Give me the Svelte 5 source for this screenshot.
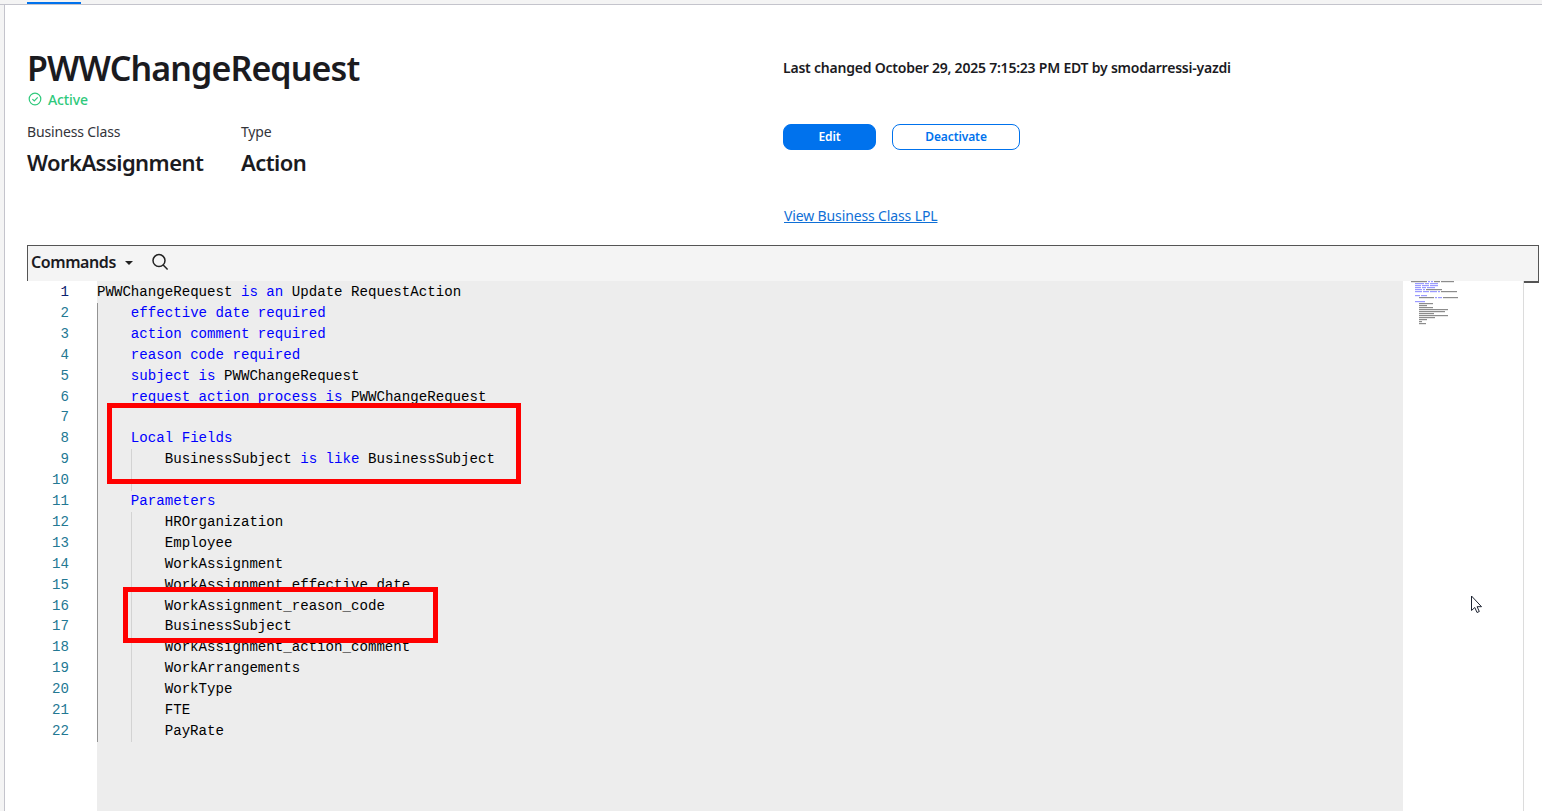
<script>
  const kw = (t) => ({ t, k: 1 });
  const tx = (t) => ({ t, k: 0 });
  const lines = [
    { g: 0, s: [tx('PWWChangeRequest '), kw('is an'), tx(' Update RequestAction')] },
    { g: 1, s: [kw('effective date required')] },
    { g: 1, s: [kw('action comment required')] },
    { g: 1, s: [kw('reason code required')] },
    { g: 1, s: [kw('subject is'), tx(' PWWChangeRequest')] },
    { g: 1, s: [kw('request action process is'), tx(' PWWChangeRequest')] },
    { g: 1, s: [], blank: true },
    { g: 1, s: [kw('Local Fields')] },
    { g: 2, s: [tx('BusinessSubject '), kw('is like'), tx(' BusinessSubject')] },
    { g: 2, s: [], blank: true },
    { g: 1, s: [kw('Parameters')] },
    ...['HROrganization', 'Employee', 'WorkAssignment', 'WorkAssignment_effective_date', 'WorkAssignment_reason_code', 'BusinessSubject', 'WorkAssignment_action_comment', 'WorkArrangements', 'WorkType', 'FTE', 'PayRate'].map((n) => ({ g: 2, s: [tx(n)] }))
  ];

  const mini = [];
  lines.forEach((l, i) => {
    let x = l.g * 4;
    l.s.forEach((seg) => {
      let pos = 0;
      seg.t.split(' ').forEach((word) => {
        if (word.length) mini.push({ x: x + pos, y: i * 2, w: word.length, k: seg.k });
        pos += word.length + 1;
      });
      x += seg.t.length;
    });
  });
</script>

<div class="page">
  <div class="tabs"><span class="tab"></span></div>
  <main class="panel">
    <header class="head">
      <div class="left">
        <h1>PWWChangeRequest</h1>
        <div class="status">
          <svg width="14" height="14" viewBox="0 0 14 14" fill="none" stroke="#2fc97c" stroke-width="1.2">
            <circle cx="7" cy="7" r="5.8" />
            <path d="M4.4 7.1 6.3 9 9.7 5.3" />
          </svg>
          <span>Active</span>
        </div>
        <div class="facts">
          <div class="fact class"><span class="label">Business Class</span><strong>WorkAssignment</strong></div>
          <div class="fact"><span class="label">Type</span><strong>Action</strong></div>
        </div>
      </div>
      <div class="right">
        <p class="changed">Last changed October 29, 2025 7:15:23 PM EDT by smodarressi-yazdi</p>
        <div class="actions">
          <button class="primary">Edit</button>
          <button class="secondary">Deactivate</button>
        </div>
        <a class="lpl" href="#lpl">View Business Class LPL</a>
      </div>
    </header>

    <section class="editor-wrap">
      <div class="toolbar">
        <span class="cmd">Commands</span>
        <span class="caret"></span>
        <svg class="search" width="18" height="18" viewBox="0 0 18 18" fill="none" stroke="#222" stroke-width="1.5">
          <circle cx="8" cy="7.6" r="6" />
          <path d="M12.2 12 16.6 16.6" />
        </svg>
      </div>
      <div class="editor">
        <div class="gutter">
          {#each lines as _, i}
            <div class="num" class:active={i === 0}>{i + 1}</div>
          {/each}
        </div>
        <div class="code">
          {#each lines as l}
            <div class="line">
              {#each Array(l.g) as _, gi}
                <span class="indent" class:outer={gi === 0}></span>
              {/each}
              {#each l.s as seg}
                <span class:kw={seg.k === 1}>{seg.t}</span>
              {/each}
            </div>
          {/each}
          <div class="mark one"></div>
          <div class="mark two"></div>
        </div>
        <div class="minimap">
          <svg width="112" height="48" viewBox="0 0 112 48">
            {#each mini as m}
              <rect x={m.x} y={m.y} width={m.w} height="1.2" fill={m.k ? '#9a9aff' : '#8c8c8c'} />
            {/each}
          </svg>
        </div>
        <div class="scroll"></div>
      </div>
    </section>
  </main>

  <svg class="cursor" width="14" height="20" viewBox="0 0 14 20">
    <path d="M1.5 1v14.5l3.3-3 2.2 5 2.3-1-2.2-4.8h4.4z" fill="#fff" stroke="#1c2230" stroke-width="1" />
  </svg>
</div>

<style>
  :global(body) {
    margin: 0;
    overflow: hidden;
    background: #fff;
  }

  .page {
    position: relative;
    width: 1542px;
    height: 811px;
    overflow: hidden;
    background: #f4f4f4;
    font-family: "Noto Sans", "Open Sans", sans-serif;
    color: #1b1b1f;
  }

  .tabs {
    height: 4px;
    padding-left: 27px;
    border-bottom: 1px solid #c4c4cc;
  }

  .tab {
    display: block;
    width: 54px;
    height: 2px;
    padding-top: 2px;
    background: #0072ed;
    background-clip: content-box;
  }

  .panel {
    height: 806px;
    margin-left: 4px;
    border-left: 1px solid #c4c4cc;
    background: #fff;
    padding-left: 22px;
    box-sizing: border-box;
  }

  .head {
    display: flex;
    height: 240px;
    box-sizing: border-box;
  }

  .left {
    width: 756px;
    padding-top: 41px;
  }

  h1 {
    margin: 0;
    font-size: 34px;
    line-height: 44px;
    font-weight: 600;
    letter-spacing: -0.9px;
  }

  .status {
    display: flex;
    align-items: center;
    gap: 6px;
    height: 20px;
    margin-top: -1px;
    padding-left: 1px;
    font-size: 14px;
    font-weight: 500;
    color: #2fc97c;
    letter-spacing: -0.1px;
  }

  .facts {
    display: flex;
    margin-top: 13px;
  }

  .fact {
    display: flex;
    flex-direction: column;
    gap: 6px;
  }

  .fact.class {
    width: 214px;
  }

  .label {
    font-size: 14px;
    line-height: 20px;
    color: #33343a;
    letter-spacing: -0.15px;
  }

  .fact strong {
    font-size: 22px;
    line-height: 28px;
    font-weight: 600;
    letter-spacing: -0.55px;
  }

  .right {
    display: flex;
    flex-direction: column;
    align-items: flex-start;
  }

  .changed {
    margin: 0;
    padding-top: 53px;
    font-size: 14px;
    line-height: 20px;
    font-weight: 600;
    letter-spacing: -0.22px;
  }

  .actions {
    display: flex;
    gap: 16px;
    margin-top: 46px;
  }

  button {
    height: 26px;
    box-sizing: border-box;
    border-radius: 8px;
    font: 600 12px/24px "Noto Sans", sans-serif;
    padding: 0;
    border: 1px solid #0072ed;
    letter-spacing: -0.1px;
  }

  .primary {
    width: 93px;
    background: #0072ed;
    color: #fff;
  }

  .secondary {
    width: 128px;
    background: #fff;
    color: #0072ed;
  }

  .lpl {
    margin-top: 56px;
    margin-left: 1px;
    font-size: 14px;
    line-height: 20px;
    color: #0f6fd6;
    letter-spacing: -0.13px;
  }

  .editor-wrap {
    width: 1512px;
  }

  .toolbar {
    display: flex;
    align-items: center;
    height: 38px;
    box-sizing: border-box;
    padding: 0 0 3px 3px;
    background: #f4f4f4;
    border: 1px solid #555;
    border-bottom-width: 2px;
  }

  .cmd {
    font-size: 16px;
    font-weight: 600;
    letter-spacing: -0.42px;
  }

  .caret {
    width: 0;
    height: 0;
    margin: 2px 0 0 9px;
    border: 4px solid transparent;
    border-top-color: #222;
    border-bottom-width: 0;
  }

  .search {
    margin-left: 18px;
  }

  .editor {
    position: relative;
    display: flex;
    height: 530px;
    margin-top: -2px;
    margin-right: 16px;
    font-family: "Liberation Mono", monospace;
    font-size: 14.11px;
    line-height: 20.9px;
    white-space: pre;
    background: #fff;
  }

  .gutter {
    width: 70px;
    flex: none;
    box-sizing: border-box;
    padding: 1.15px 28px 0 0;
    text-align: right;
  }

  .num {
    height: 20.9px;
    color: #237893;
  }

  .num.active {
    color: #0b216f;
  }

  .code {
    position: relative;
    flex: none;
    width: 1306px;
    padding-top: 1.15px;
    box-sizing: border-box;
    background: #ededed;
    color: #000;
  }

  .line {
    display: flex;
    height: 20.9px;
  }

  .indent {
    width: 33.87px;
    flex: none;
    box-sizing: border-box;
    border-left: 1px solid #d3d3d3;
  }

  .indent.outer {
    border-left-color: #939393;
  }

  .kw {
    color: #0000ff;
  }

  .mark {
    position: absolute;
    box-sizing: border-box;
    border: 5px solid #f00;
  }

  .mark.one {
    left: 10px;
    top: 122px;
    width: 414px;
    height: 81px;
  }

  .mark.two {
    left: 26px;
    top: 306px;
    width: 315px;
    height: 56px;
  }

  .minimap {
    flex: none;
    width: 120px;
    padding: 0 0 0 8px;
    box-sizing: border-box;
    line-height: 0;
  }

  .scroll {
    flex: none;
    width: 1px;
    background: #dcdcdc;
  }

  .cursor {
    position: absolute;
    left: 1470px;
    top: 595px;
  }
</style>
